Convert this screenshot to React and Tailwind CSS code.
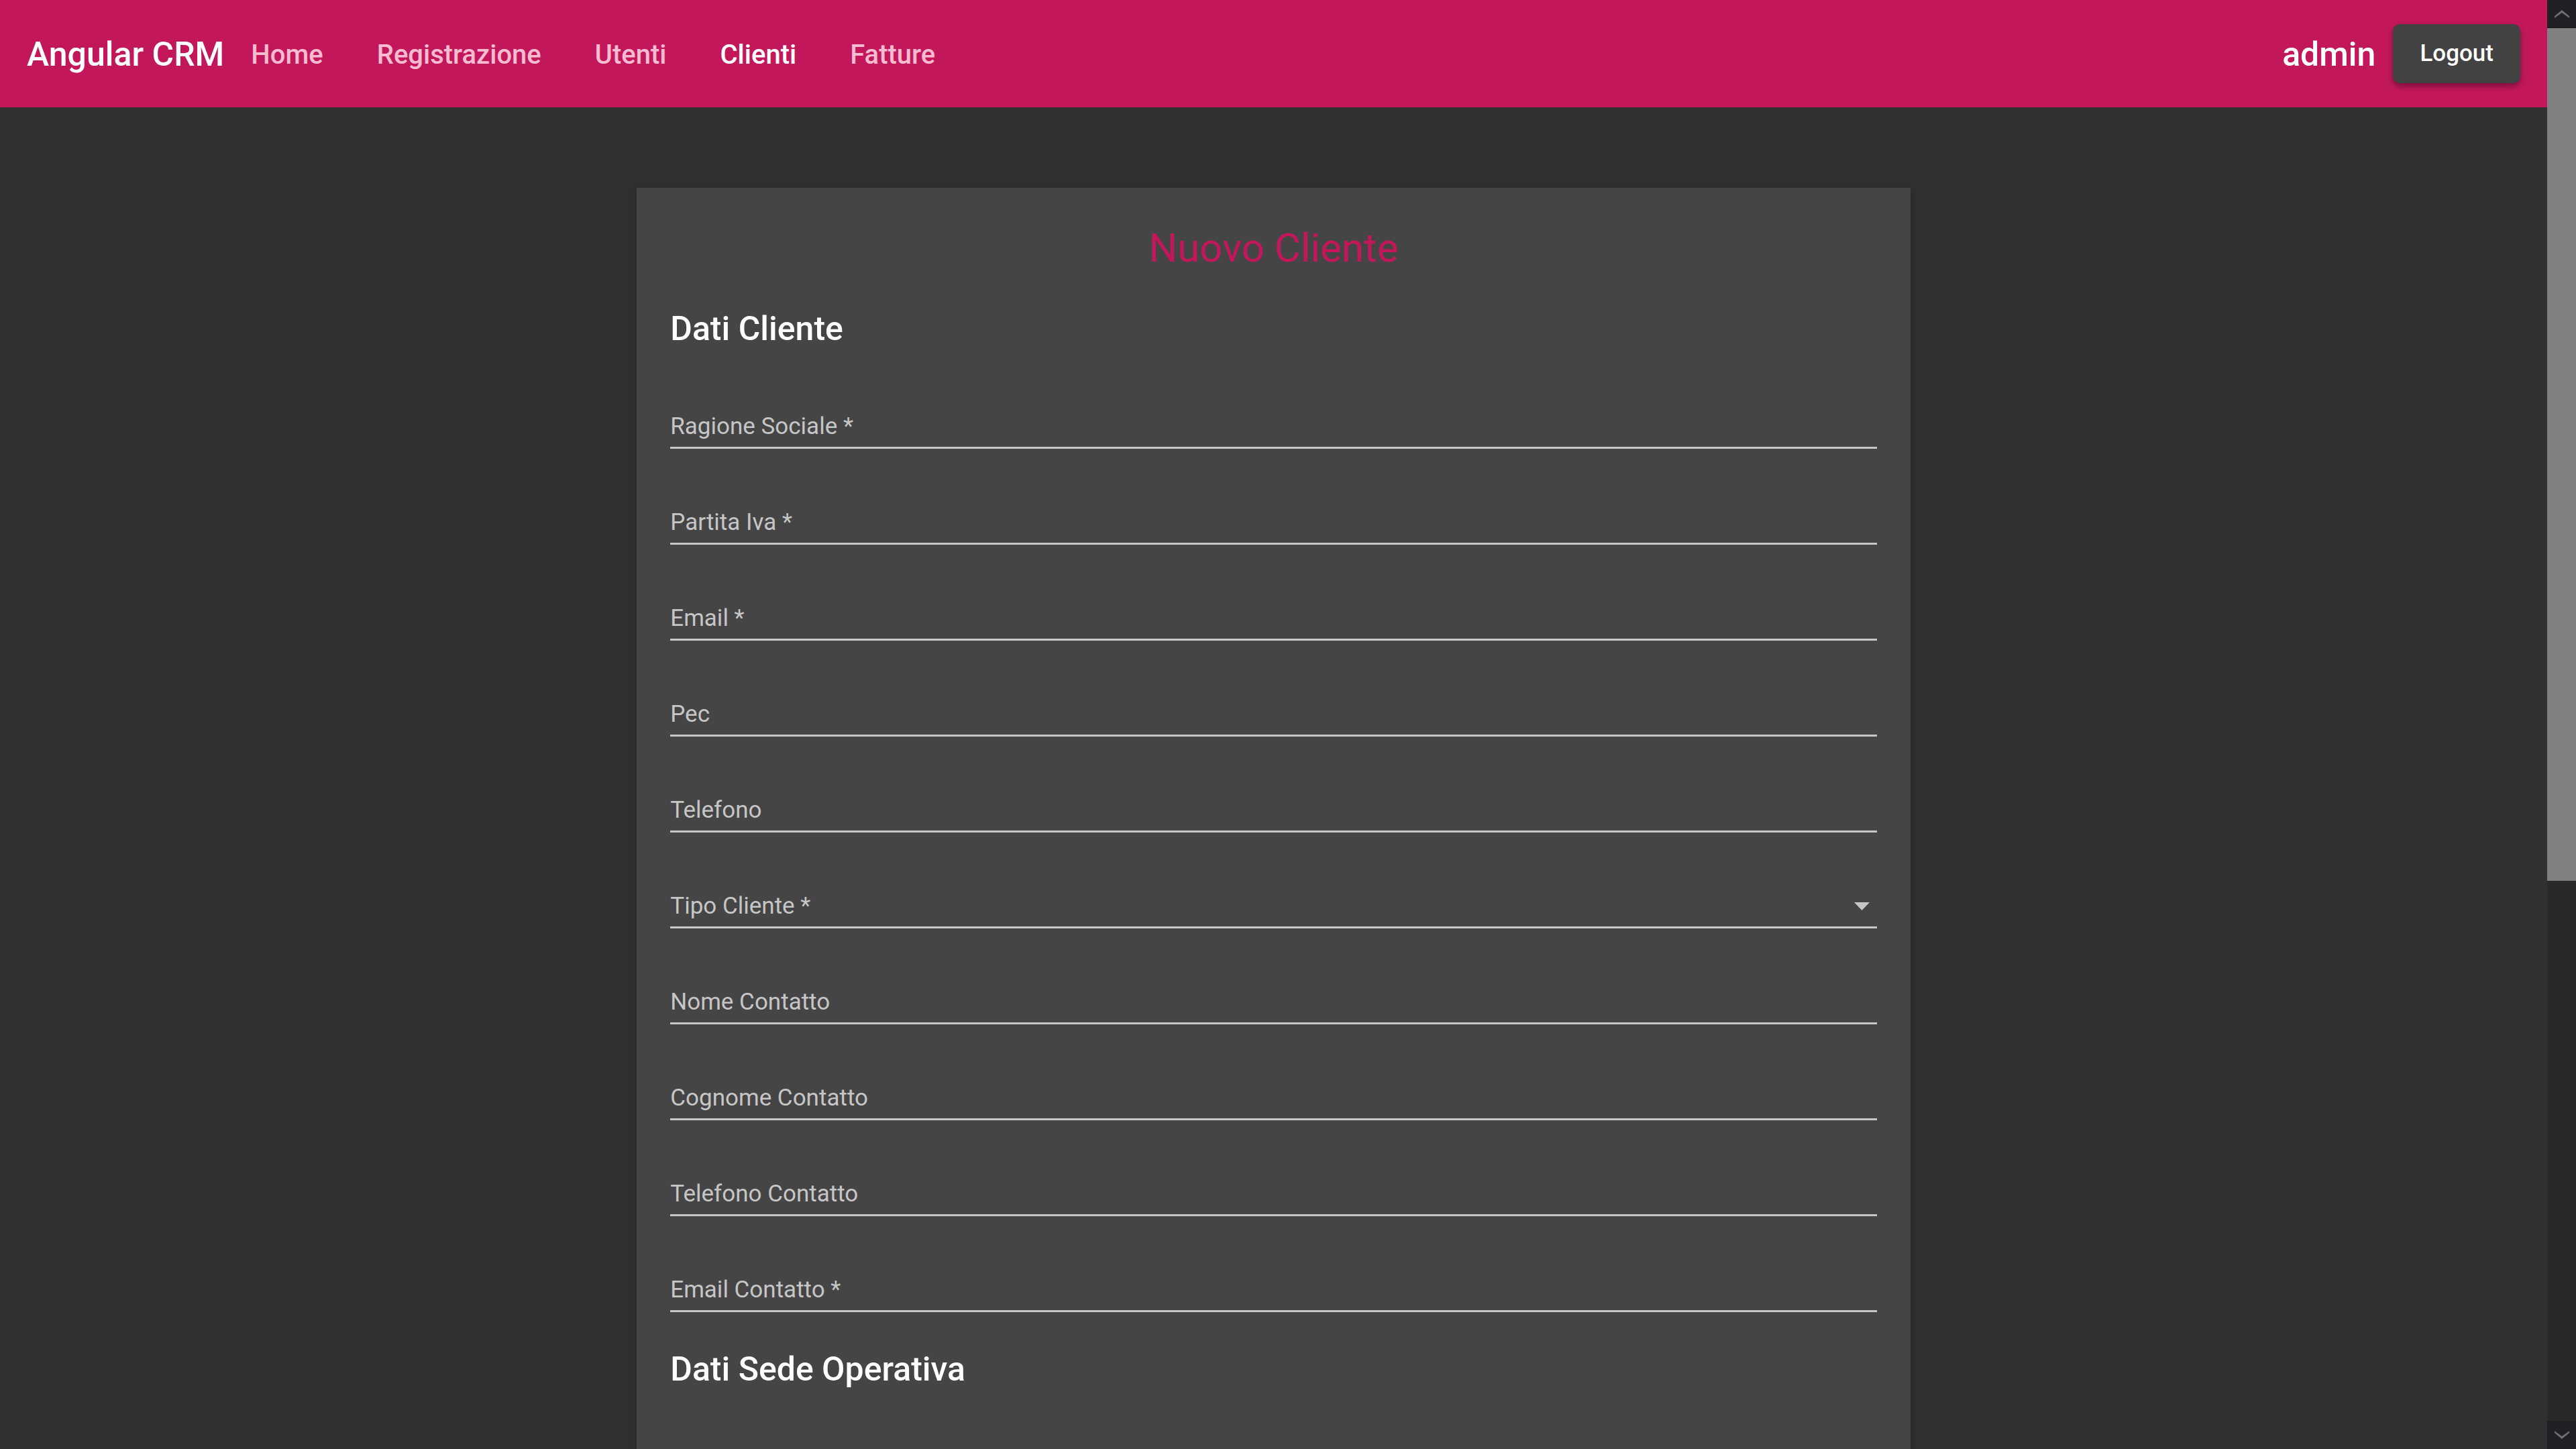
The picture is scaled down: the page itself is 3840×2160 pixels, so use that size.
import React from 'react';

const fields = [
  { label: 'Ragione Sociale *' },
  { label: 'Partita Iva *' },
  { label: 'Email *' },
  { label: 'Pec' },
  { label: 'Telefono' },
  { label: 'Tipo Cliente *', select: true },
  { label: 'Nome Contatto' },
  { label: 'Cognome Contatto' },
  { label: 'Telefono Contatto' },
  { label: 'Email Contatto *' },
];

const links = ['Home', 'Registrazione', 'Utenti', 'Clienti', 'Fatture'];

function Field({ label, select }) {
  return (
    <div className="pb-[87px]">
      <div className="flex items-center h-[41px] mt-[2px]">
        <span className="flex-1 text-[35px] leading-[41px] text-[#c6c6c6]">{label}</span>
        {select && (
          <svg width="23" height="12" viewBox="0 0 23 12" className="mr-[11px]">
            <polygon points="0,0 23,0 11.5,12" fill="#c6c6c6" />
          </svg>
        )}
      </div>
      <div className="mt-[10px] h-[3px] bg-[#c8c8c8]" />
    </div>
  );
}

export default function App() {
  return (
    <div
      className="h-screen w-screen overflow-hidden flex"
      style={{ fontFamily: 'Roboto, "Liberation Sans", sans-serif' }}
    >
      <div className="flex-1 flex flex-col bg-[#303030] overflow-hidden">
        <header className="h-[160px] shrink-0 bg-[#c2185b] flex items-center px-[40px] pt-[3px]">
          <span className="text-[50px] font-medium text-white">Angular CRM</span>
          <nav className="flex">
            {links.map(l => (
              <span
                key={l}
                className={`px-[40px] text-[40px] font-medium ${l === 'Clienti' ? 'text-white' : 'text-[#f8bbd0]'}`}
              >
                {l}
              </span>
            ))}
          </nav>
          <div className="flex-1" />
          <span className="text-[50px] font-medium text-white mr-[26px]">admin</span>
          <button className="-mt-[3px] h-[88px] px-[40px] rounded-[10px] bg-[#424242] text-[35px] font-medium text-white shadow-[0_5px_8px_rgba(0,0,0,0.35)]">
            Logout
          </button>
        </header>

        <div className="flex-1 pt-[120px]">
          <div className="mx-auto w-1/2 bg-[#454545] pt-[55px] px-[50px] shadow-[0_5px_12px_rgba(0,0,0,0.25)] min-h-[2000px]">
            <h1 className="text-center text-[60px] leading-[70px] text-[#c2185b]">Nuovo Cliente</h1>
            <h2 className="mt-[55px] text-[50px] leading-[60px] font-medium text-white">Dati Cliente</h2>
            <div className="mt-[95px]">
              {fields.map(f => (
                <Field key={f.label} {...f} />
              ))}
            </div>
            <h2 className="-mt-[32px] text-[50px] leading-[60px] font-medium text-white">Dati Sede Operativa</h2>
          </div>
        </div>
      </div>

      <div className="w-[43px] shrink-0 flex flex-col bg-[#29292b]">
        <div className="h-[42px] flex items-center justify-center bg-[#202024]">
          <svg width="22" height="12" viewBox="0 0 22 12">
            <polygon points="0,9 11,0 22,9 22,12 11,4 0,12" fill="#6e6e6e" />
          </svg>
        </div>
        <div className="h-[1271px] bg-[#808080]" />
        <div className="flex-1" />
        <div className="h-[42px] flex items-center justify-center bg-[#202024]">
          <svg width="22" height="12" viewBox="0 0 22 12">
            <polygon points="0,0 11,8 22,0 22,3 11,12 0,3" fill="#6e6e6e" />
          </svg>
        </div>
      </div>
    </div>
  );
}
